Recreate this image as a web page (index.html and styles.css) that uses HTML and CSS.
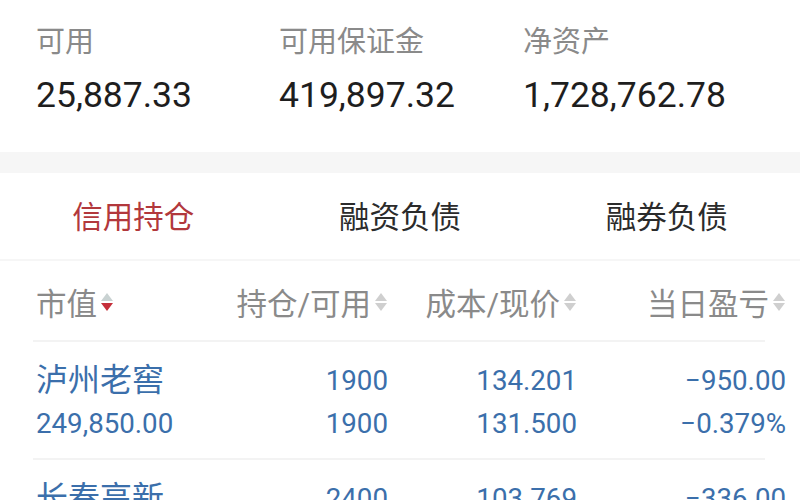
FILE: index.html
```html
<!DOCTYPE html>
<html lang="zh-CN">
<head>
<meta charset="utf-8">
<title>信用持仓</title>
<link rel="stylesheet" href="styles.css">
</head>
<body>
<div class="page">
  <section class="summary">
    <div class="stat"><div class="stat-label">可用</div><div class="stat-value">25,887.33</div></div>
    <div class="stat"><div class="stat-label">可用保证金</div><div class="stat-value">419,897.32</div></div>
    <div class="stat"><div class="stat-label">净资产</div><div class="stat-value">1,728,762.78</div></div>
  </section>
  <div class="band"></div>
  <nav class="tabs">
    <div class="tab active">信用持仓</div>
    <div class="tab">融资负债</div>
    <div class="tab">融券负债</div>
  </nav>
  <div class="table">
    <div class="head row-grid">
      <div class="hcell left">市值<svg class="sort" viewBox="0 0 14 24" width="14" height="24"><polygon points="7,3 13,11 1,11" fill="#c9d2d2"/><polygon points="1,13 13,13 7,21" fill="#c52f3a"/></svg></div>
      <div class="hcell">持仓/可用<svg class="sort" viewBox="0 0 14 24" width="14" height="24"><polygon points="7,3 13,11 1,11" fill="#cfcfcf"/><polygon points="1,13 13,13 7,21" fill="#cfcfcf"/></svg></div>
      <div class="hcell">成本/现价<svg class="sort" viewBox="0 0 14 24" width="14" height="24"><polygon points="7,3 13,11 1,11" fill="#cfcfcf"/><polygon points="1,13 13,13 7,21" fill="#cfcfcf"/></svg></div>
      <div class="hcell">当日盈亏<svg class="sort" viewBox="0 0 14 24" width="14" height="24"><polygon points="7,3 13,11 1,11" fill="#cfcfcf"/><polygon points="1,13 13,13 7,21" fill="#cfcfcf"/></svg></div>
    </div>
    <div class="pos row-grid">
      <div class="cell left"><div class="name">泸州老窖</div><div>249,850.00</div></div>
      <div class="cell"><div>1900</div><div>1900</div></div>
      <div class="cell"><div>134.201</div><div>131.500</div></div>
      <div class="cell"><div>−950.00</div><div>−0.379%</div></div>
    </div>
    <div class="pos row-grid">
      <div class="cell left"><div class="name">长春高新</div><div>249,040.00</div></div>
      <div class="cell"><div>2400</div><div>2400</div></div>
      <div class="cell"><div>103.769</div><div>103.600</div></div>
      <div class="cell"><div>−336.00</div><div>−0.135%</div></div>
    </div>
  </div>
</div>
</body>
</html>
```
FILE: styles.css
```css
* { box-sizing: border-box; }
html, body { margin: 0; padding: 0; background: #ffffff; }
body {
  font-family: "Roboto", "Noto Sans CJK SC", "Noto Sans", sans-serif;
  width: 800px;
  height: 500px;
  overflow: hidden;
}
.page { width: 800px; }

.summary {
  display: grid;
  grid-template-columns: 243px 244px 1fr;
  padding: 22px 0 0 36px;
  height: 152px;
}
.stat-label {
  font-size: 29px;
  line-height: 40px;
  color: #8a8a8a;
}
.stat-value {
  margin-top: 11px;
  font-size: 35.5px;
  line-height: 44px;
  color: #1e1e1e;
}

.band { height: 21px; background: #f6f6f6; }

.tabs {
  display: grid;
  grid-template-columns: repeat(3, 1fr);
  height: 88px;
  border-bottom: 2px solid #f6f6f6;
  align-items: center;
}
.tab {
  text-align: center;
  font-size: 30.5px;
  color: #2b2b2b;
  padding-bottom: 2px;
}
.tab.active { color: #b2383c; }

.row-grid {
  display: grid;
  grid-template-columns: 164px 188px 189px 1fr;
  padding: 0 14px 0 36px;
  background: linear-gradient(#f3f3f3, #f3f3f3) no-repeat 33px 100% / 732px 2px;
}
.head {
  height: 81px;
  align-items: center;
  font-size: 30.5px;
  color: #8a8a8a;
}
.hcell {
  display: flex;
  align-items: center;
  justify-content: flex-end;
  white-space: nowrap;
}
.hcell.left { justify-content: flex-start; }
.sort { margin-left: 3px; flex: none; }

.pos {
  height: 118px;
  padding-top: 17px;
  color: #3b6fab;
  font-size: 27.7px;
  line-height: 43px;
}
.cell { text-align: right; white-space: nowrap; }
.cell.left { text-align: left; }
.name { font-size: 32px; }
```
